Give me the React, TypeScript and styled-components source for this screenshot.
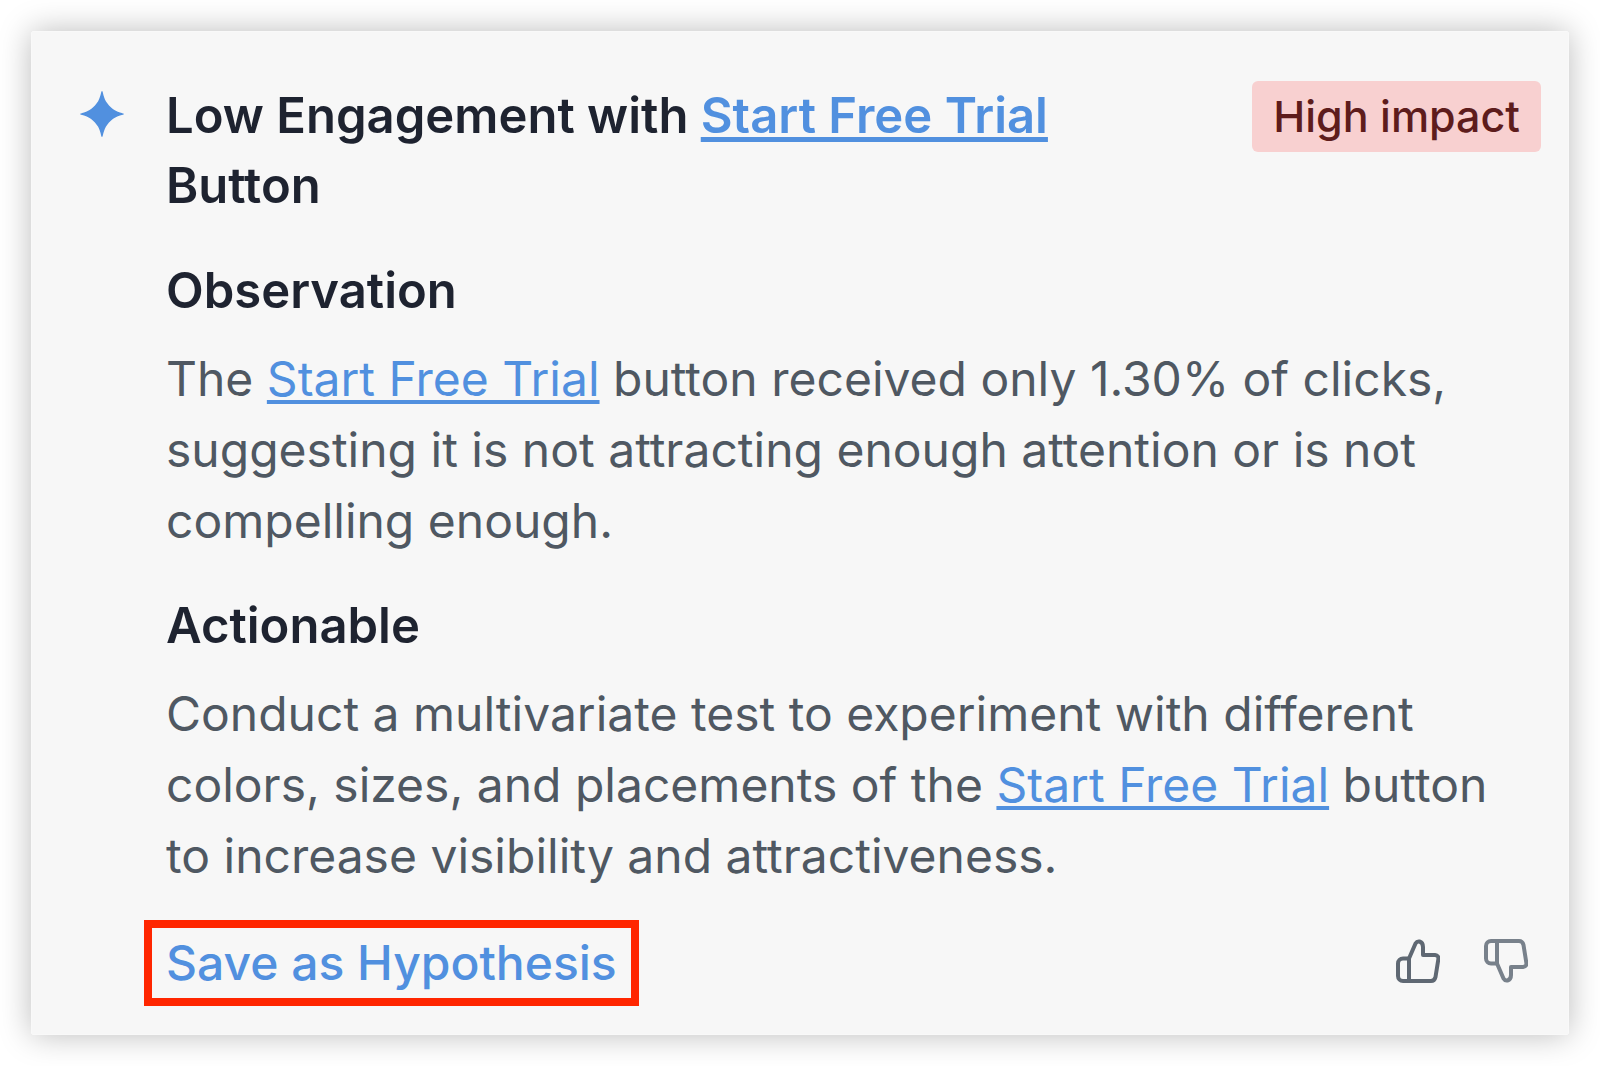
import React from "react";
import styled, { createGlobalStyle } from "styled-components";

const GlobalStyle = createGlobalStyle`
  *, *::before, *::after { box-sizing: border-box; }
  body {
    margin: 0;
    background: #ffffff;
    font-family: Inter, "Liberation Sans", sans-serif;
    font-size: 48px;
    line-height: 70px;
    color: #4f5862;
  }
  h2, h3, p { margin: 0; font-size: inherit; }
`;

const Page = styled.main`
  padding: 31px;
`;

const Card = styled.article`
  display: grid;
  grid-template-columns: 44px minmax(0, 1fr);
  column-gap: 42px;
  padding: 49px 27px 28px 48px;
  background: #f7f7f7;
  border: 1px solid #f9f9f9;
  border-radius: 2px;
  box-shadow: 0 0 32px rgba(0, 0, 0, 0.27);
`;

const Sparkle = styled.svg`
  width: 44px;
  height: 46px;
  margin-top: 10px;
  fill: #5190df;
`;

const Content = styled.div`
  display: flex;
  flex-direction: column;
  gap: 35px;
`;

const Header = styled.header`
  display: flex;
  align-items: flex-start;
  justify-content: space-between;
  gap: 60px;
`;

const Title = styled.h2`
  font-size: 49px;
  font-weight: 600;
  color: #1e2330;
`;

const Link = styled.a`
  color: #5190df;
  text-decoration: underline;
  text-decoration-thickness: 4px;
  text-underline-offset: 4px;
  text-decoration-skip-ink: none;

  ${Title} & {
    text-decoration-thickness: 5px;
  }
`;

const Badge = styled.span`
  flex: none;
  padding: 0 21px;
  border-radius: 6px;
  background: #f8d0d0;
  color: #5e1c1c;
  font-size: 43px;
  font-weight: 500;
  line-height: 71px;
`;

const Section = styled.section`
  display: flex;
  flex-direction: column;
  gap: 17px;
`;

const SectionTitle = styled.h3`
  font-size: 49px;
  font-weight: 600;
  color: #1e2330;
`;

const Text = styled.p`
  line-height: 71px;
`;

const Footer = styled.footer`
  display: flex;
  align-items: center;
  justify-content: space-between;
  margin-top: -6px;
  margin-left: -22px;
  padding-right: 13px;
`;

const SaveButton = styled.button`
  padding: 0 14px;
  border: 8px solid #ff2600;
  background: none;
  color: #5190df;
  font: inherit;
  font-weight: 500;
  cursor: pointer;
`;

const Votes = styled.div`
  display: flex;
  gap: 44px;
  padding-bottom: 4px;
`;

const VoteButton = styled.button<{ $muted?: boolean }>`
  display: flex;
  padding: 0;
  border: 0;
  background: none;
  color: ${(p) => (p.$muted ? "#78818b" : "#5f6873")};
  cursor: pointer;
`;

const VoteIcon = styled.svg`
  width: 44px;
  height: 44px;
  fill: none;
  stroke: currentColor;
  stroke-width: 4;
  stroke-linejoin: round;
`;

const TrialLink = () => <Link href="#start-free-trial">Start Free Trial</Link>;

const thumbBase = "M13 19.5H7A5 5 0 0 0 2 24.500V37A5 5 0 0 0 7 42H13Z";
const thumbHand = "M13 19.500L19.500 4.500Q21 2 23.500 2.500Q27 3.500 27 8V16H39Q43 16.500 42.300 20.500L39.500 38Q38.500 42 35 42H13";

export default function App() {
  return (
    <>
      <GlobalStyle />
      <Page>
        <Card>
          <Sparkle viewBox="0 0 44 46" aria-hidden="true">
            <path d="M22 0C23 0 23 5 26 10.500C30 16.500 34 19.500 40 21.500Q44 22.500 44 23Q44 23.500 40 24.500C34 26.500 30 29.500 26 35.500C23 41 23 46 22 46C21 46 21 41 18 35.500C14 29.500 10 26.500 4 24.500Q0 23.500 0 23Q0 22.500 4 21.500C10 19.500 14 16.500 18 10.500C21 5 21 0 22 0Z" />
          </Sparkle>
          <Content>
            <Header>
              <Title>
                Low Engagement with <TrialLink /> Button
              </Title>
              <Badge>High impact</Badge>
            </Header>
            <Section>
              <SectionTitle>Observation</SectionTitle>
              <Text>
                The <TrialLink /> button received only 1.30% of clicks, suggesting it is not attracting
                enough attention or is not compelling enough.
              </Text>
            </Section>
            <Section>
              <SectionTitle>Actionable</SectionTitle>
              <Text>
                Conduct a multivariate test to experiment with different colors, sizes, and placements of
                the <TrialLink /> button to increase visibility and attractiveness.
              </Text>
            </Section>
            <Footer>
              <SaveButton type="button">Save as Hypothesis</SaveButton>
              <Votes>
                <VoteButton type="button" aria-label="Helpful">
                  <VoteIcon viewBox="0 0 44 44" aria-hidden="true">
                    <path d={thumbBase} />
                    <path d={thumbHand} />
                  </VoteIcon>
                </VoteButton>
                <VoteButton type="button" aria-label="Not helpful" $muted>
                  <VoteIcon viewBox="0 0 44 44" aria-hidden="true">
                    <g transform="matrix(1 0 0 -1 0 44)">
                      <path d={thumbBase} />
                      <path d={thumbHand} />
                    </g>
                  </VoteIcon>
                </VoteButton>
              </Votes>
            </Footer>
          </Content>
        </Card>
      </Page>
    </>
  );
}
